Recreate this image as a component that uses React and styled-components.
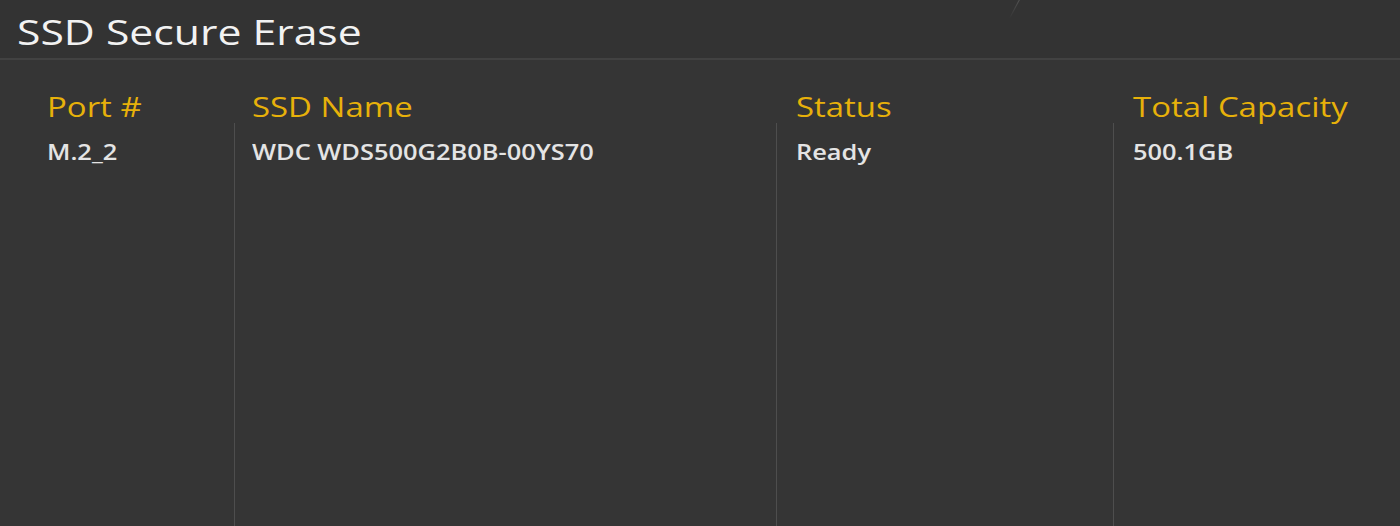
import styled, { createGlobalStyle } from "styled-components";

const GlobalStyle = createGlobalStyle`
  html, body {
    margin: 0;
    padding: 0;
    background: #353535;
    font-family: "Open Sans", "DejaVu Sans", sans-serif;
  }
`;

const Page = styled.div`
  width: 1400px;
  height: 526px;
  background: #353535;
  display: flex;
  flex-direction: column;
  overflow: hidden;
`;

const TitleBar = styled.div`
  position: relative;
  height: 60px;
  box-sizing: border-box;
  padding: 5px 0 0 17px;
  border-bottom: 2px solid #424242;
  background: #333333;
  display: flex;
  align-items: center;
  &::after {
    content: "";
    position: absolute;
    left: 1014px;
    top: -2px;
    width: 1px;
    height: 22px;
    background: linear-gradient(rgba(255, 255, 255, 0.16), rgba(255, 255, 255, 0));
    transform: rotate(28deg);
  }
`;

// the BIOS font is rendered wide, so text gets stretched sideways
const Wide = styled.span`
  display: inline-block;
  white-space: nowrap;
  transform: scaleX(${(p) => p.$x || 1.2});
  transform-origin: left center;
`;

const Title = styled.h1`
  margin: 0;
  font-size: 35px;
  font-weight: 400;
  color: #f2f2f2;
`;

const Table = styled.div`
  flex: 1;
  display: grid;
  grid-template-columns: 234px 542px 337px 1fr;
  grid-template-rows: 32px 1fr;
  padding-top: 31px;
`;

const HeadCell = styled.div`
  padding-left: ${(p) => p.$pad}px;
  font-size: 27px;
  line-height: 32px;
  color: #e7b10a;
`;

const BodyCell = styled.div`
  padding: 17px 0 0 ${(p) => p.$pad}px;
  border-left: ${(p) => (p.$divider ? "1px solid #4e4e4e" : "none")};
  font-size: 21px;
  font-weight: 600;
  line-height: 24px;
  color: #e4e4e4;
`;

const columns = [
  { head: "Port #", value: "M.2_2", pad: 47 },
  { head: "SSD Name", value: "WDC WDS500G2B0B-00YS70", pad: 18 },
  { head: "Status", value: "Ready", pad: 20 },
  { head: "Total Capacity", value: "500.1GB", pad: 20 },
];

export default function App() {
  return (
    <>
      <GlobalStyle />
      <Page>
        <TitleBar>
          <Title>
            <Wide $x={1.22}>SSD Secure Erase</Wide>
          </Title>
        </TitleBar>
        <Table>
          {columns.map((c) => (
            <HeadCell key={c.head} $pad={c.pad}>
              <Wide $x={1.22}>{c.head}</Wide>
            </HeadCell>
          ))}
          {columns.map((c, i) => (
            <BodyCell key={c.value} $pad={i === 0 ? c.pad : c.pad - 1} $divider={i > 0}>
              <Wide $x={1.21}>{c.value}</Wide>
            </BodyCell>
          ))}
        </Table>
      </Page>
    </>
  );
}
